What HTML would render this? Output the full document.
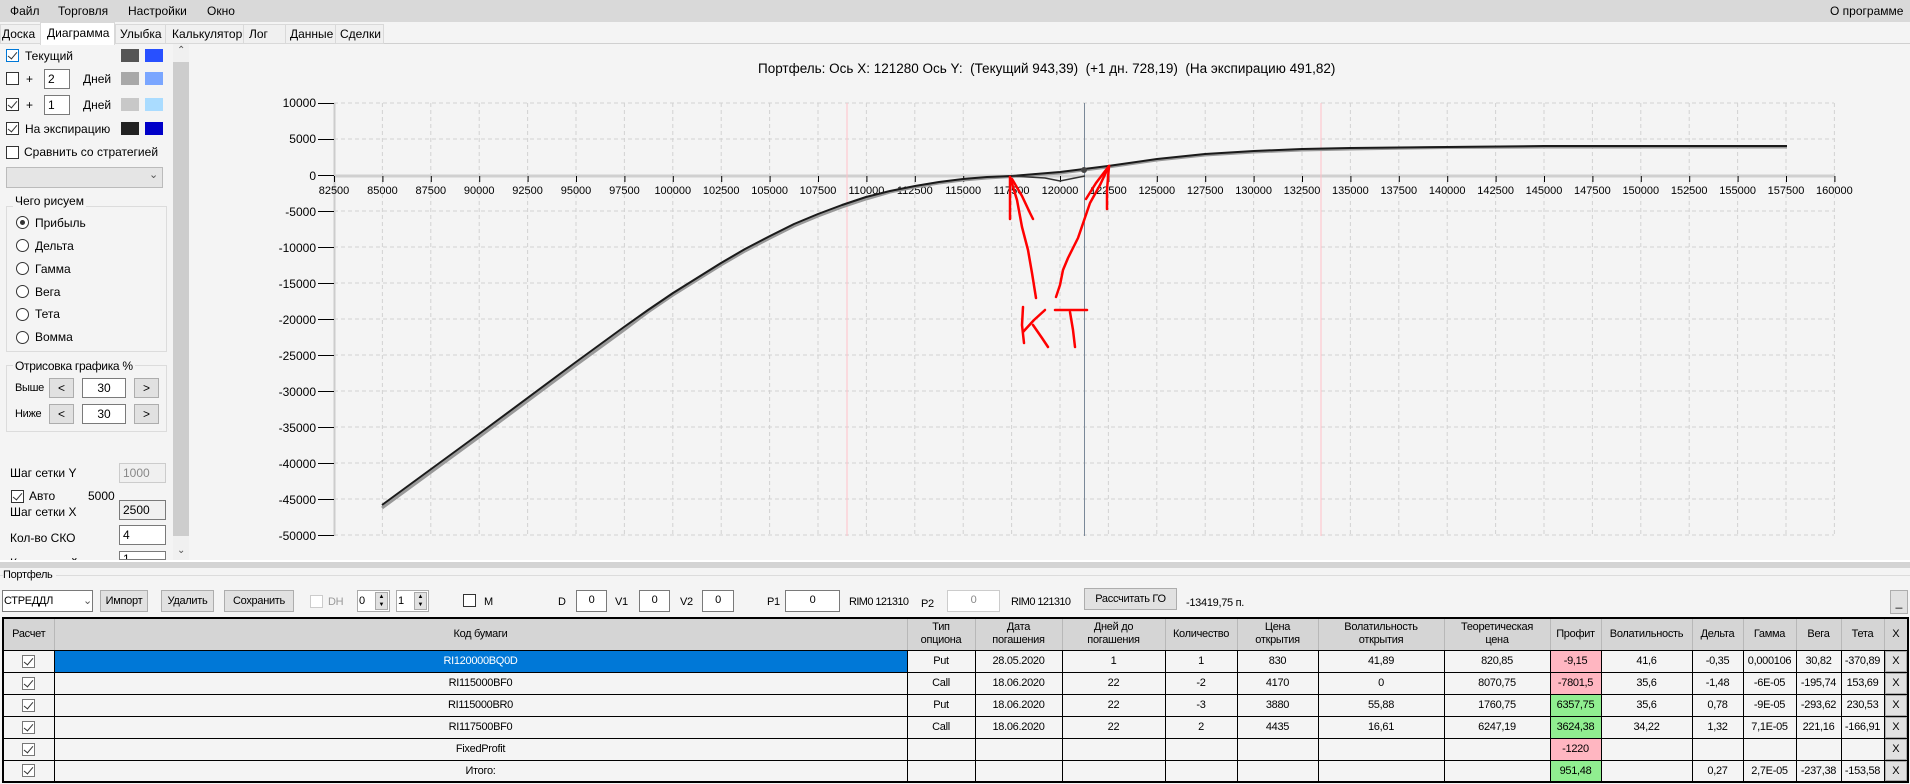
<!DOCTYPE html>
<html><head><meta charset="utf-8"><style>
*{box-sizing:border-box;margin:0;padding:0}
body{width:1910px;height:784px;overflow:hidden;background:#f4f4f4;font-family:"Liberation Sans","DejaVu Sans",sans-serif;font-size:12px;color:#000;position:relative}
.a{position:absolute;white-space:nowrap}
.cb{position:absolute;width:13px;height:13px;border:1px solid #333;background:#fff}
.cb.c::after{content:"";position:absolute;left:3px;top:0px;width:4px;height:8px;border:solid #333;border-width:0 1.5px 1.5px 0;transform:rotate(40deg)}
.rb{position:absolute;width:13px;height:13px;border:1px solid #333;border-radius:50%;background:#fff}
.rb.c::after{content:"";position:absolute;left:3px;top:3px;width:5px;height:5px;border-radius:50%;background:#333}
.tb{position:absolute;border:1px solid #7a7a7a;background:#fff;padding-left:3px;line-height:18px}
.btn{position:absolute;border:1px solid #adadad;background:#e1e1e1;text-align:center}
.sw{position:absolute;width:18px;height:13px}
.nar{font-size:11px;letter-spacing:-0.3px}
table{position:absolute;left:2px;top:617px;width:1906px;border-collapse:collapse;table-layout:fixed;border:2px solid #000}
td{border:1px solid #000;height:22px;text-align:center;font-size:11px;letter-spacing:-0.3px;overflow:hidden;white-space:nowrap}
th{background:#d5d5d5;border:1px solid #b8b8b8;border-bottom:1px solid #000;height:32px;font-weight:normal;font-size:11px;line-height:13px;letter-spacing:-0.3px}
td .cb{position:relative;display:inline-block;vertical-align:middle;border-color:#777}
.pk{background:#ffb6c1}.gr{background:#90ee90}
.x{background:#e1e1e1;border:1px solid #000;box-shadow:inset 0 0 0 1px #adadad}
</style></head><body>
<!-- menu -->
<div class="a" style="left:0;top:0;width:1910px;height:22px;background:#d9d9d9"></div>
<div class="a" style="left:10px;top:4px;font-size:12px">Файл</div>
<div class="a" style="left:58px;top:4px">Торговля</div>
<div class="a" style="left:128px;top:4px">Настройки</div>
<div class="a" style="left:207px;top:4px">Окно</div>
<div class="a" style="left:1830px;top:4px">О программе</div>
<!-- tabs -->
<div class="a" style="left:0;top:43px;width:1910px;height:1px;background:#d0d0d0"></div>
<div class="a" style="left:0;top:24px;width:384px;height:20px;background:#f0f0f0;border:1px solid #d9d9d9"></div>
<div class="a" style="left:2px;top:27px">Доска</div>
<div class="a" style="left:40px;top:22px;width:75px;height:23px;background:#fff;border:1px solid #d9d9d9;border-bottom:none"></div>
<div class="a" style="left:47px;top:26px">Диаграмма</div>
<div class="a" style="left:115px;top:24px;width:1px;height:20px;background:#d9d9d9"></div>
<div class="a" style="left:120px;top:27px">Улыбка</div>
<div class="a" style="left:165px;top:24px;width:1px;height:20px;background:#d9d9d9"></div>
<div class="a" style="left:172px;top:27px">Калькулятор</div>
<div class="a" style="left:243px;top:24px;width:1px;height:20px;background:#d9d9d9"></div>
<div class="a" style="left:249px;top:27px">Лог</div>
<div class="a" style="left:285px;top:24px;width:1px;height:20px;background:#d9d9d9"></div>
<div class="a" style="left:290px;top:27px">Данные</div>
<div class="a" style="left:335px;top:24px;width:1px;height:20px;background:#d9d9d9"></div>
<div class="a" style="left:340px;top:27px">Сделки</div>
<!-- left panel -->
<div class="cb c" style="left:6px;top:49px;border-color:#0078d7"></div><div class="a" style="left:25px;top:49px">Текущий</div>
<div class="sw" style="left:121px;top:49px;background:#555"></div><div class="sw" style="left:145px;top:49px;background:#2850ff"></div>
<div class="cb" style="left:6px;top:72px"></div><div class="a" style="left:26px;top:72px">+</div>
<div class="tb" style="left:44px;top:69px;width:26px;height:20px">2</div><div class="a" style="left:83px;top:72px">Дней</div>
<div class="sw" style="left:121px;top:72px;background:#a8a8a8"></div><div class="sw" style="left:145px;top:72px;background:#7aa6ff"></div>
<div class="cb c" style="left:6px;top:98px"></div><div class="a" style="left:26px;top:98px">+</div>
<div class="tb" style="left:44px;top:95px;width:26px;height:20px">1</div><div class="a" style="left:83px;top:98px">Дней</div>
<div class="sw" style="left:121px;top:98px;background:#c8c8c8"></div><div class="sw" style="left:145px;top:98px;background:#aadcff"></div>
<div class="cb c" style="left:6px;top:122px"></div><div class="a" style="left:25px;top:122px">На экспирацию</div>
<div class="sw" style="left:121px;top:122px;background:#222"></div><div class="sw" style="left:145px;top:122px;background:#0000c8"></div>
<div class="cb" style="left:6px;top:146px"></div><div class="a" style="left:24px;top:145px">Сравнить со стратегией</div>
<div class="a" style="left:6px;top:167px;width:157px;height:21px;background:#e5e5e5;border:1px solid #bbb"></div>
<div class="a" style="left:149px;top:168px;font-size:11px;color:#555">&#8964;</div>
<div class="a" style="left:6px;top:206px;width:161px;height:146px;border:1px solid #dcdcdc"></div>
<div class="a" style="left:13px;top:194px;background:#f4f4f4;padding:0 2px">Чего рисуем</div>
<div class="rb c" style="left:16px;top:216px"></div><div class="a" style="left:35px;top:216px">Прибыль</div>
<div class="rb" style="left:16px;top:239px"></div><div class="a" style="left:35px;top:239px">Дельта</div>
<div class="rb" style="left:16px;top:262px"></div><div class="a" style="left:35px;top:262px">Гамма</div>
<div class="rb" style="left:16px;top:285px"></div><div class="a" style="left:35px;top:285px">Вега</div>
<div class="rb" style="left:16px;top:308px"></div><div class="a" style="left:35px;top:307px">Тета</div>
<div class="rb" style="left:16px;top:331px"></div><div class="a" style="left:35px;top:330px">Вомма</div>
<div class="a" style="left:6px;top:365px;width:161px;height:67px;border:1px solid #dcdcdc"></div>
<div class="a nar" style="left:13px;top:359px;background:#f4f4f4;padding:0 2px;font-size:12px">Отрисовка графика %</div>
<div class="a nar" style="left:15px;top:382px">Выше</div>
<div class="btn" style="left:49px;top:378px;width:25px;height:20px;line-height:18px">&lt;</div>
<div class="tb" style="left:82px;top:378px;width:44px;height:20px;text-align:center;padding:0">30</div>
<div class="btn" style="left:134px;top:378px;width:25px;height:20px;line-height:18px">&gt;</div>
<div class="a nar" style="left:15px;top:408px">Ниже</div>
<div class="btn" style="left:49px;top:404px;width:25px;height:20px;line-height:18px">&lt;</div>
<div class="tb" style="left:82px;top:404px;width:44px;height:20px;text-align:center;padding:0">30</div>
<div class="btn" style="left:134px;top:404px;width:25px;height:20px;line-height:18px">&gt;</div>
<div class="a" style="left:10px;top:466px">Шаг сетки Y</div>
<div class="tb" style="left:119px;top:463px;width:47px;height:20px;background:#f0f0f0;border-color:#ccc;color:#888">1000</div>
<div class="cb c" style="left:11px;top:490px"></div><div class="a" style="left:29px;top:489px">Авто</div><div class="a" style="left:88px;top:489px">5000</div>
<div class="a" style="left:10px;top:505px">Шаг сетки X</div>
<div class="tb" style="left:119px;top:500px;width:47px;height:20px;background:#f0f0f0">2500</div>
<div class="a" style="left:10px;top:531px">Кол-во СКО</div>
<div class="tb" style="left:119px;top:525px;width:47px;height:20px">4</div>
<div class="a" style="left:10px;top:556px;height:4px;overflow:hidden">Кол-во дней</div>
<div class="tb" style="left:119px;top:551px;width:47px;height:9px;line-height:14px;overflow:hidden">1</div>
<!-- scrollbar -->
<div class="a" style="left:173px;top:44px;width:16px;height:516px;background:#f0f0f0"></div>
<div class="a" style="left:173px;top:62px;width:16px;height:474px;background:#cdcdcd"></div>
<div class="a" style="left:177px;top:45px;font-size:10px;color:#555">&#8963;</div>
<div class="a" style="left:177px;top:545px;font-size:10px;color:#555">&#8964;</div>
<!-- splitter -->
<div class="a" style="left:0;top:560px;width:1910px;height:2px;background:#fff"></div>
<div class="a" style="left:0;top:562px;width:1910px;height:6px;background:#d4d4d4"></div>
<div class="a" style="left:0;top:575px;width:1910px;height:1px;background:#dcdcdc"></div>
<div class="a nar" style="left:3px;top:569px;background:#f4f4f4;padding-right:3px">Портфель</div>
<!-- toolbar -->
<div class="a nar" style="left:2px;top:590px;width:91px;height:22px;border:1px solid #7a7a7a;background:#fff;line-height:20px;padding-left:1px">СТРЕДДЛ<span style="position:absolute;left:80px;color:#555">&#8964;</span></div>
<div class="btn nar" style="left:100px;top:590px;width:48px;height:22px;line-height:20px">Импорт</div>
<div class="btn nar" style="left:161px;top:590px;width:53px;height:22px;line-height:20px">Удалить</div>
<div class="btn nar" style="left:224px;top:590px;width:70px;height:22px;line-height:20px">Сохранить</div>
<div class="cb" style="left:310px;top:595px;border-color:#ccc"></div><div class="a nar" style="left:328px;top:596px;color:#999">DH</div>
<div class="a" style="left:357px;top:590px;width:33px;height:22px;border:1px solid #aaa;background:#fff"></div><div class="a nar" style="left:359px;top:595px">0</div>
<div class="a" style="left:375px;top:592px;width:13px;height:18px;background:#e1e1e1;border:1px solid #aaa;font-size:6px;line-height:8px;text-align:center">▲<br>▼</div>
<div class="a" style="left:396px;top:590px;width:33px;height:22px;border:1px solid #aaa;background:#fff"></div><div class="a nar" style="left:398px;top:595px">1</div>
<div class="a" style="left:414px;top:592px;width:13px;height:18px;background:#e1e1e1;border:1px solid #aaa;font-size:6px;line-height:8px;text-align:center">▲<br>▼</div>
<div class="cb" style="left:463px;top:594px"></div><div class="a nar" style="left:484px;top:596px">M</div>
<div class="a nar" style="left:558px;top:596px">D</div>
<div class="tb nar" style="left:576px;top:590px;width:31px;height:22px;text-align:center;padding:0">0</div>
<div class="a nar" style="left:615px;top:596px">V1</div>
<div class="tb nar" style="left:639px;top:590px;width:31px;height:22px;text-align:center;padding:0">0</div>
<div class="a nar" style="left:680px;top:596px">V2</div>
<div class="tb nar" style="left:702px;top:590px;width:32px;height:22px;text-align:center;padding:0">0</div>
<div class="a nar" style="left:767px;top:596px">P1</div>
<div class="tb nar" style="left:785px;top:590px;width:55px;height:22px;text-align:center;padding:0">0</div>
<div class="a nar" style="left:849px;top:596px;letter-spacing:-0.6px">RIM0 121310</div>
<div class="a nar" style="left:921px;top:598px">P2</div>
<div class="tb nar" style="left:947px;top:590px;width:53px;height:22px;text-align:center;padding:0;border-color:#ccc;color:#888">0</div>
<div class="a nar" style="left:1011px;top:596px;letter-spacing:-0.6px">RIM0 121310</div>
<div class="btn nar" style="left:1084px;top:588px;width:93px;height:22px;line-height:20px">Рассчитать ГО</div>
<div class="a nar" style="left:1186px;top:597px">-13419,75 п.</div>
<div class="btn" style="left:1890px;top:590px;width:18px;height:24px;line-height:22px">_</div>
<!-- table -->
<table>
<colgroup><col style="width:51px"><col style="width:853px"><col style="width:68px"><col style="width:87px"><col style="width:103px"><col style="width:72px"><col style="width:81px"><col style="width:126px"><col style="width:106px"><col style="width:51px"><col style="width:91px"><col style="width:51px"><col style="width:53px"><col style="width:45px"><col style="width:43px"><col style="width:24px"></colgroup>
<tr><th>Расчет</th><th>Код бумаги</th><th>Тип<br>опциона</th><th>Дата<br>погашения</th><th>Дней до<br>погашения</th><th>Количество</th><th>Цена<br>открытия</th><th>Волатильность<br>открытия</th><th>Теоретическая<br>цена</th><th>Профит</th><th>Волатильность</th><th>Дельта</th><th>Гамма</th><th>Вега</th><th>Тета</th><th>X</th></tr>
<tr><td><span class="cb c"></span></td><td style="background:#0078d7;color:#fff">RI120000BQ0D</td><td>Put</td><td>28.05.2020</td><td>1</td><td>1</td><td>830</td><td>41,89</td><td>820,85</td><td class="pk">-9,15</td><td>41,6</td><td>-0,35</td><td>0,000106</td><td>30,82</td><td>-370,89</td><td class="x">X</td></tr>
<tr><td><span class="cb c"></span></td><td>RI115000BF0</td><td>Call</td><td>18.06.2020</td><td>22</td><td>-2</td><td>4170</td><td>0</td><td>8070,75</td><td class="pk">-7801,5</td><td>35,6</td><td>-1,48</td><td>-6E-05</td><td>-195,74</td><td>153,69</td><td class="x">X</td></tr>
<tr><td><span class="cb c"></span></td><td>RI115000BR0</td><td>Put</td><td>18.06.2020</td><td>22</td><td>-3</td><td>3880</td><td>55,88</td><td>1760,75</td><td class="gr">6357,75</td><td>35,6</td><td>0,78</td><td>-9E-05</td><td>-293,62</td><td>230,53</td><td class="x">X</td></tr>
<tr><td><span class="cb c"></span></td><td>RI117500BF0</td><td>Call</td><td>18.06.2020</td><td>22</td><td>2</td><td>4435</td><td>16,61</td><td>6247,19</td><td class="gr">3624,38</td><td>34,22</td><td>1,32</td><td>7,1E-05</td><td>221,16</td><td>-166,91</td><td class="x">X</td></tr>
<tr><td><span class="cb c"></span></td><td>FixedProfit</td><td></td><td></td><td></td><td></td><td></td><td></td><td></td><td class="pk">-1220</td><td></td><td></td><td></td><td></td><td></td><td class="x">X</td></tr>
<tr><td><span class="cb c"></span></td><td>Итого:</td><td></td><td></td><td></td><td></td><td></td><td></td><td></td><td class="gr">951,48</td><td></td><td>0,27</td><td>2,7E-05</td><td>-237,38</td><td>-153,58</td><td class="x">X</td></tr>
</table>
<!-- chart -->
<div class="a" style="left:758px;top:61px;font-size:13.5px">Портфель: Ось X: 121280 Ось Y:&nbsp; (Текущий 943,39)&nbsp; (+1 дн. 728,19)&nbsp; (На экспирацию 491,82)</div>
<svg class="a" style="left:0;top:0" width="1910" height="560" xmlns="http://www.w3.org/2000/svg" font-family="Liberation Sans, sans-serif">
<g stroke="#d2d2d2" stroke-dasharray="4,3" stroke-width="1">
<path d="M334 103H1834M334 139H1834M334 211H1834M334 247H1834M334 283H1834M334 319H1834M334 355H1834M334 391H1834M334 427H1834M334 463H1834M334 499H1834M334 535H1834"/>
<path d="M382.4 103V536M430.8 103V536M479.2 103V536M527.6 103V536M576 103V536M624.4 103V536M672.8 103V536M721.2 103V536M769.6 103V536M818 103V536M866.4 103V536M914.8 103V536M963.2 103V536M1011.6 103V536M1060 103V536M1108.4 103V536M1156.8 103V536M1205.2 103V536M1253.6 103V536M1302 103V536M1350.4 103V536M1398.8 103V536M1447.2 103V536M1495.6 103V536M1544 103V536M1592.4 103V536M1640.8 103V536M1689.2 103V536M1737.6 103V536M1786 103V536M1834.4 103V536"/>
</g>
<line x1="334.5" y1="103" x2="334.5" y2="536" stroke="#ccc" stroke-width="2"/>
<line x1="334" y1="176" x2="1834" y2="176" stroke="#d0d0d0" stroke-width="3"/>
<g stroke="#000"><path d="M318 103.5H334M318 139.5H334M318 175.5H334M318 211.5H334M318 247.5H334M318 283.5H334M318 319.5H334M318 355.5H334M318 391.5H334M318 427.5H334M318 463.5H334M318 499.5H334M318 535.5H334"/>
<path d="M334.5 176v6M382.9 176v6M431.3 176v6M479.7 176v6M528.1 176v6M576.5 176v6M624.9 176v6M673.3 176v6M721.7 176v6M770.1 176v6M818.5 176v6M866.9 176v6M915.3 176v6M963.7 176v6M1012.1 176v6M1060.5 176v6M1108.9 176v6M1157.3 176v6M1205.7 176v6M1254.1 176v6M1302.5 176v6M1350.9 176v6M1399.3 176v6M1447.7 176v6M1496.1 176v6M1544.5 176v6M1592.9 176v6M1641.3 176v6M1689.7 176v6M1738.1 176v6M1786.5 176v6M1834.9 176v6"/></g>
<g font-size="12" text-anchor="end">
<text x="316" y="107">10000</text><text x="316" y="143">5000</text><text x="316" y="180">0</text><text x="316" y="216">-5000</text><text x="316" y="252">-10000</text><text x="316" y="288">-15000</text><text x="316" y="324">-20000</text><text x="316" y="360">-25000</text><text x="316" y="396">-30000</text><text x="316" y="432">-35000</text><text x="316" y="468">-40000</text><text x="316" y="504">-45000</text><text x="316" y="540">-50000</text>
</g>
<g font-size="11" text-anchor="middle">
<text x="334" y="194">82500</text><text x="382.4" y="194">85000</text><text x="430.8" y="194">87500</text><text x="479.2" y="194">90000</text><text x="527.6" y="194">92500</text><text x="576" y="194">95000</text><text x="624.4" y="194">97500</text><text x="672.8" y="194">100000</text><text x="721.2" y="194">102500</text><text x="769.6" y="194">105000</text><text x="818" y="194">107500</text><text x="866.4" y="194">110000</text><text x="914.8" y="194">112500</text><text x="963.2" y="194">115000</text><text x="1011.6" y="194">117500</text><text x="1060" y="194">120000</text><text x="1108.4" y="194">122500</text><text x="1156.8" y="194">125000</text><text x="1205.2" y="194">127500</text><text x="1253.6" y="194">130000</text><text x="1302" y="194">132500</text><text x="1350.4" y="194">135000</text><text x="1398.8" y="194">137500</text><text x="1447.2" y="194">140000</text><text x="1495.6" y="194">142500</text><text x="1544" y="194">145000</text><text x="1592.4" y="194">147500</text><text x="1640.8" y="194">150000</text><text x="1689.2" y="194">152500</text><text x="1737.6" y="194">155000</text><text x="1786" y="194">157500</text><text x="1834.4" y="194">160000</text>
</g>
<line x1="847" y1="103" x2="847" y2="536" stroke="#ffc0c8" stroke-width="1"/>
<line x1="1321" y1="103" x2="1321" y2="536" stroke="#ffc0c8" stroke-width="1"/>
<line x1="1084.5" y1="103" x2="1084.5" y2="536" stroke="#7a8898" stroke-width="1"/>
<path d="M382 508 L479 437 L576 365 L624 330 L648 312 L673 295 L697 280 L721 265 L745 251 L770 238 L794 226 L818 216 L842 207 L866 199 L890 192 L915 187 L939 183 L963 180 L987 178 L1012 176.5 L1060 173 L1108 167 L1157 160 L1205 155 L1254 152 L1302 150 L1350 149 L1447 147.5 L1544 147 L1787 147" fill="none" stroke="#999" stroke-width="3" stroke-linejoin="round"/>
<path d="M382 505 L479 434 L576 362 L624 327 L648 310 L673 293 L697 278 L721 263 L745 249 L770 236 L794 224 L818 214 L842 205 L866 197 L890 191 L915 186 L939 182 L963 179 L987 177 L1012 176 L1060 172 L1108 166 L1157 159 L1205 154 L1254 151 L1302 149 L1350 148 L1447 147 L1544 146 L1787 146" fill="none" stroke="#1a1a1a" stroke-width="2" stroke-linejoin="round"/>
<path d="M1012 176 L1045 178 L1060 181 L1085 176" fill="none" stroke="#333" stroke-width="1.5"/>
<circle cx="1084" cy="170" r="3" fill="#444"/>
<g fill="none" stroke="#f00" stroke-width="2.5" stroke-linecap="round" stroke-linejoin="round">
<path d="M1010 177 L1010 219"/><path d="M1012 179 L1022 196 L1030 213 L1033 219"/>
<path d="M1010 177 L1017 200 L1022 227 L1028 250 L1032 273 L1036 298"/>
<path d="M1109 166 L1100 185 L1090 203 L1078 238 L1068 258 L1063 270 L1060 285 L1056 297"/>
<path d="M1109 166 L1096 183 L1086 199"/><path d="M1109 166 L1107 190 L1107 209"/>
<path d="M1023 307 L1022 325 L1024 343"/><path d="M1045 310 L1034 320 L1023 332"/><path d="M1033 325 L1042 338 L1048 347"/>
<path d="M1055 310 L1087 310"/><path d="M1070 312 L1073 330 L1075 347"/>
</g>
</svg>
</body></html>
